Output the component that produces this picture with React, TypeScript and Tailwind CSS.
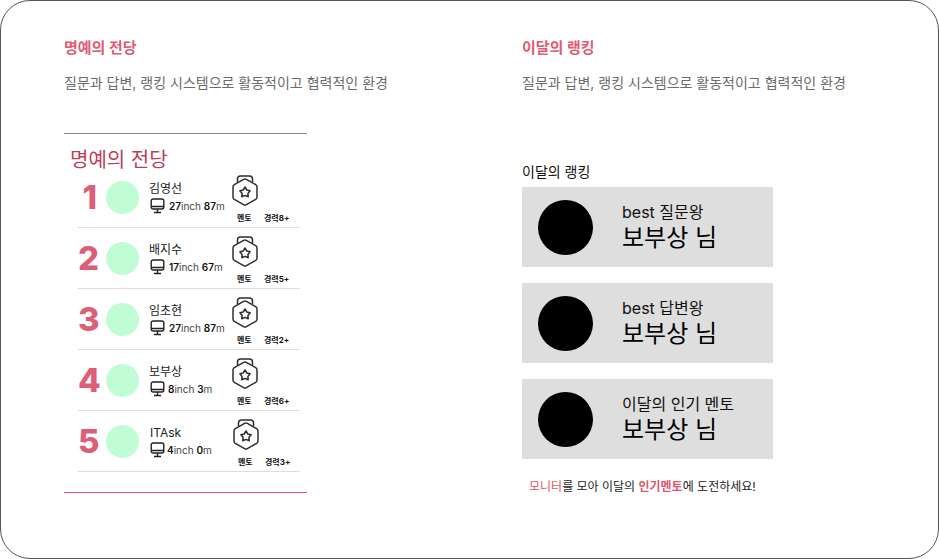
const rankers = [
  { rank: 1, name: '김영선', size: '27', dist: '87', career: '경력8+', nameGap: 'ml-[10px]', textGap: 'ml-[4px]' },
  { rank: 2, name: '배지수', size: '17', dist: '67', career: '경력5+', nameGap: 'ml-[10px]', textGap: 'ml-[4px]' },
  { rank: 3, name: '임초현', size: '27', dist: '87', career: '경력2+', nameGap: 'ml-[10px]', textGap: 'ml-[4px]' },
  { rank: 4, name: '보부상', size: '8', dist: '3', career: '경력6+', nameGap: 'ml-[10px]', textGap: 'ml-[3px]' },
  { rank: 5, name: 'ITAsk', size: '4', dist: '0', career: '경력3+', nameGap: 'ml-[11px]', textGap: 'ml-[2px]' },
];

const awards = [
  { title: 'best 질문왕' },
  { title: 'best 답변왕' },
  { title: '이달의 인기 멘토' },
];

function MonitorIcon() {
  return (
    <svg width="15" height="16" viewBox="0 0 15 16" fill="none" stroke="#222" strokeWidth="1.4">
      <rect x="1.2" y="1" width="12.6" height="10" rx="2" />
      <path d="M1.2 8.5h12.6M7.5 11v3.2M4 14.5h7" />
    </svg>
  );
}

function BadgeIcon() {
  return (
    <svg width="26" height="34" viewBox="0 0 26 34" fill="none" stroke="#2e2e2e" strokeWidth="1.5" strokeLinejoin="round">
      <path d="M5.5 7V4a3 3 0 0 1 3-3h9a3 3 0 0 1 3 3v3" />
      <path d="M11.6 4.3a2.8 2.8 0 0 1 2.8 0l9.3 5.4a2.8 2.8 0 0 1 1.3 2.3v10a2.8 2.8 0 0 1-1.3 2.3l-9.3 5.4a2.8 2.8 0 0 1-2.8 0l-9.3-5.4A2.8 2.8 0 0 1 1 22V12a2.8 2.8 0 0 1 1.3-2.3z" />
      <path d="M13 12l1.8 3 3.3.8-2.2 2.6.3 3.4-3.2-1.4-3.2 1.4.3-3.4-2.2-2.6 3.3-.8z" />
    </svg>
  );
}

function RankRow({ r }: { r: (typeof rankers)[number] }) {
  return (
    <div className="flex h-[61px] border-b border-[#dddddd]">
      <div className="w-[19px] pt-[8px] text-right text-[33px] leading-[44px] font-extrabold text-[#dc5f77]">{r.rank}</div>
      <div className="mt-[14px] ml-[9px] h-[33px] w-[33px] rounded-full bg-[#c0fdd4]" />
      <div className={`${r.nameGap} w-[83px] shrink-0 pt-[13px]`}>
        <div className="text-[12px] leading-[17px] text-[#222222]">{r.name}</div>
        <div className="mt-[1px] flex items-center text-[10px] leading-[16px] text-[#444444]">
          <div className={r.name === 'ITAsk' ? 'ml-0' : 'ml-[1px]'}>
            <MonitorIcon />
          </div>
          <span className={r.textGap}>
            <b className="font-semibold text-[#111111]">{r.size}</b>inch <b className="font-semibold text-[#111111]">{r.dist}</b>m
          </span>
        </div>
      </div>
      <div className="mt-[8px] h-[34px] w-[26px] shrink-0">
        <BadgeIcon />
      </div>
      <div className="ml-[-21px] flex h-full items-start pt-[46px] text-[8px] leading-[10px] font-bold text-[#111111]">
        <span className="w-[27px]">멘토</span>
        <span>{r.career}</span>
      </div>
    </div>
  );
}

function AwardCard({ title }: { title: string }) {
  return (
    <div className="flex h-20 w-[251px] items-center bg-[#dedede] pl-4">
      <div className="h-[55px] w-[55px] rounded-full bg-black" />
      <div className="ml-[29px]">
        <div className="text-[16px] leading-5 text-[#111111]">{title}</div>
        <div className="mt-[1px] text-[24px] leading-[30px] text-black">보부상 님</div>
      </div>
    </div>
  );
}

export default function App() {
  return (
    <div
      className="flex h-[559px] w-[939px] overflow-hidden rounded-[30px] border border-[#555555] bg-white"
      style={{ fontFamily: 'Inter, "Noto Sans CJK KR", sans-serif' }}
    >
      <div className="ml-[63px] w-[243px] pt-[39px]">
        <h2 className="text-[15px] leading-4 font-bold text-[#dd5b73]">명예의 전당</h2>
        <p className="mt-[17px] text-[14px] leading-5 whitespace-nowrap text-[#6b6b6b]">질문과 답변, 랭킹 시스템으로 활동적이고 협력적인 환경</p>
        <div className="mt-[40px] h-[360px] border-t border-b border-t-[#9a7f85] border-b-[#e0566f]">
          <div className="pt-[13px] pl-[6px] text-[20px] leading-[27px] text-[#b8405a]">명예의 전당</div>
          <div className="mt-[-7px] ml-[14px] w-[222px]">
            {rankers.map((r) => (
              <RankRow key={r.rank} r={r} />
            ))}
          </div>
        </div>
      </div>
      <div className="ml-[215px] w-[340px] pt-[39px]">
        <h2 className="text-[15px] leading-4 font-bold text-[#dd5b73]">이달의 랭킹</h2>
        <p className="mt-[17px] text-[14px] leading-5 whitespace-nowrap text-[#6b6b6b]">질문과 답변, 랭킹 시스템으로 활동적이고 협력적인 환경</p>
        <div className="mt-[69px] text-[14px] leading-5 text-[#111111]">이달의 랭킹</div>
        <div className="mt-[5px] flex flex-col gap-4">
          {awards.map((a) => (
            <AwardCard key={a.title} title={a.title} />
          ))}
        </div>
        <p className="mt-[19px] pl-[7px] text-[12px] leading-[18px] text-[#222222]">
          <span className="text-[#e0566f]">모니터</span>를 모아 이달의 <b className="font-bold text-[#e0566f]">인기멘토</b>에 도전하세요!
        </p>
      </div>
    </div>
  );
}
